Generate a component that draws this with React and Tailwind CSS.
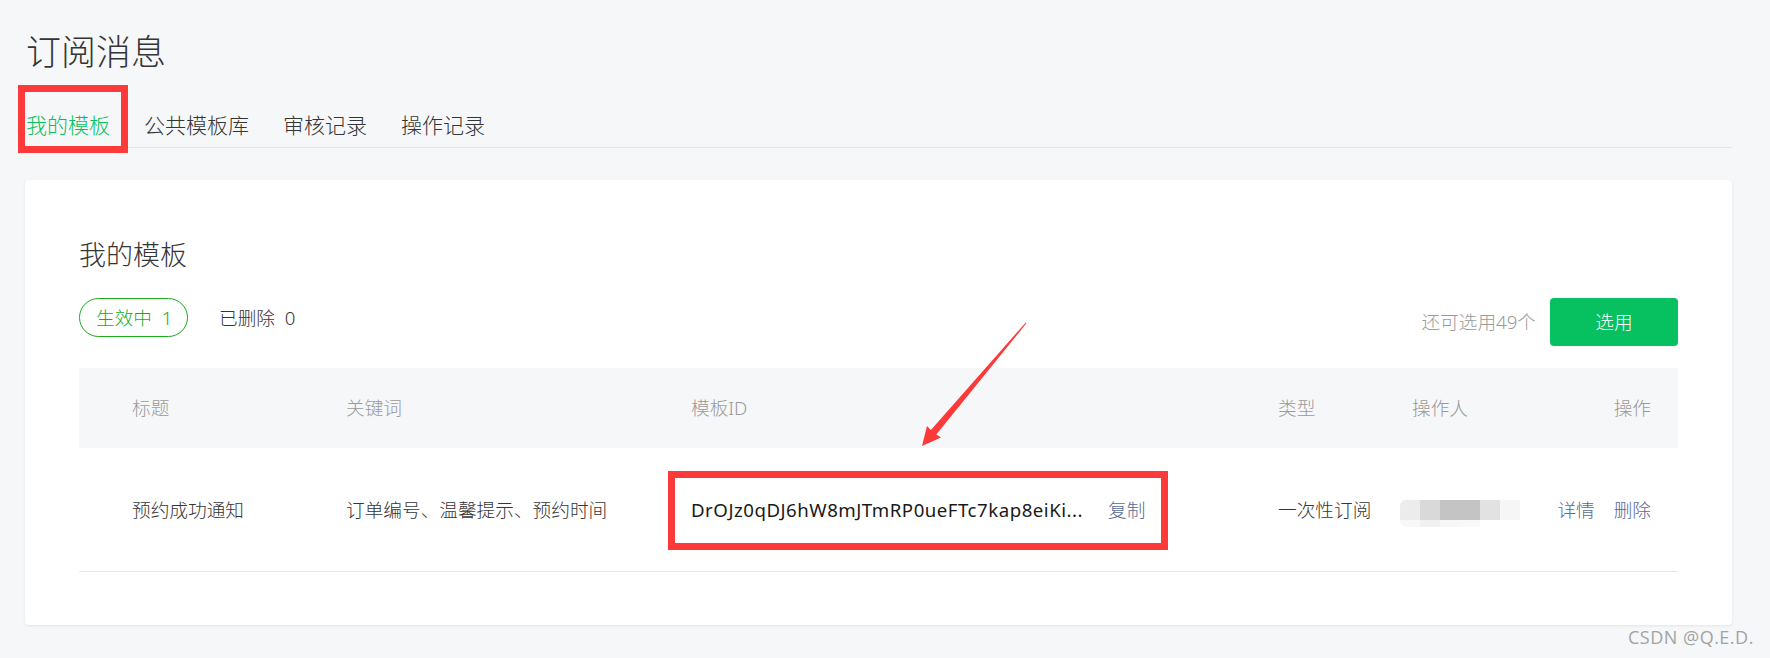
import React from 'react';

const FONT = { fontFamily: '"Noto Sans", "Noto Sans CJK SC", sans-serif' };

const TABS = ['我的模板', '公共模板库', '审核记录', '操作记录'];

const BLUR = [
  ['bg-[#ececec]', 'bg-[#d9d9d9]', 'bg-[#c4c4c4]', 'bg-[#c4c4c4]', 'bg-[#e2e2e2]', 'bg-[#f6f6f6]'],
  ['bg-[#f8f8f8]', 'bg-[#f1f1f1]', 'bg-[#f7f7f7]', 'bg-[#f9f9f9]', 'bg-white', 'bg-white'],
];

const BlurredName = () => (
  <div className="flex flex-col overflow-hidden rounded-[6px]">
    {BLUR.map((row, i) => (
      <div key={i} className={`flex ${i === 0 ? 'h-[20px]' : 'h-[7px]'}`}>
        {row.map((c, j) => (
          <div key={j} className={`w-[20px] ${c}`} />
        ))}
      </div>
    ))}
  </div>
);

const App = () => {
  return (
    <div
      className="relative h-[658px] overflow-hidden bg-[#f6f7f9] pl-[25px] pr-[38px] pt-[31px] font-light text-[#353535]"
      style={FONT}
    >
      <h1 className="pl-[1px] text-[35px] font-light leading-[42px]">订阅消息</h1>

      <div className="mt-[38px] flex gap-[34px] border-b border-[#e3e5ea] pb-[8px] pl-[1px]">
        {TABS.map((tab, i) => (
          <span
            key={tab}
            className={`text-[21px] leading-[28px] ${i === 0 ? 'text-[#07c160]' : 'text-[#353535]'}`}
          >
            {tab}
          </span>
        ))}
      </div>

      <div className="mt-[32px] rounded-[4px] bg-white px-[54px] pb-[53px] pt-[57px] shadow-[0_1px_3px_rgba(0,0,0,0.08)]">
        <h2 className="text-[27px] font-light leading-[36px]">我的模板</h2>

        <div className="mt-[25px] flex items-start justify-between">
          <div className="flex items-center">
            <span className="flex h-[39px] w-[109px] items-center rounded-full border border-[#1aad19] pl-[16px] text-[18.67px] text-[#1aad19]">
              生效中&nbsp;&nbsp;1
            </span>
            <span className="ml-[31px] text-[18.67px]">已删除&nbsp;&nbsp;0</span>
          </div>
          <div className="flex items-center">
            <span className="text-[18.67px] text-[#9a9a9a]">还可选用49个</span>
            <button className="ml-[14px] h-[48px] w-[128px] rounded-[4px] bg-[#07c160] text-[18.67px] text-white">
              选用
            </button>
          </div>
        </div>

        <div className="mt-[22px] text-[18.67px]">
          <div className="flex h-[80px] items-center bg-[#f6f7f9] pl-[53px] pr-[27px] text-[#9a9a9a]">
            <span className="w-[214px]">标题</span>
            <span className="w-[345px]">关键词</span>
            <span className="w-[587px]">模板ID</span>
            <span className="w-[134px]">类型</span>
            <span className="flex-1">操作人</span>
            <span>操作</span>
          </div>
          <div className="flex h-[124px] items-center border-b border-[#e6e6e6] pl-[53px] pr-[27px]">
            <span className="w-[214px]">预约成功通知</span>
            <span className="w-[345px]">订单编号、温馨提示、预约时间</span>
            <span className="flex w-[587px] items-center">
              <span className="w-[417px] font-normal tracking-[0.5px] text-[#1a1a1a]">
                DrOJz0qDJ6hW8mJTmRP0ueFTc7kap8eiKi...
              </span>
              <span className="text-[#576b95]">复制</span>
            </span>
            <span className="w-[122px]">一次性订阅</span>
            <span className="flex-1 pt-[7px]">
              <BlurredName />
            </span>
            <span className="flex gap-[19px] text-[#576b95]">
              <span>详情</span>
              <span>删除</span>
            </span>
          </div>
        </div>
      </div>

      {/* annotations over the screenshot */}
      <div className="absolute left-[18px] top-[85px] h-[68px] w-[110px] border-[7px] border-[#fc3a3a]" />
      <div className="absolute left-[668px] top-[471px] h-[79px] w-[500px] border-[7px] border-[#fc3a3a]" />
      <svg className="absolute left-0 top-0" width="1770" height="658" viewBox="0 0 1770 658" fill="none">
        <polygon
          points="1026.4,323.3 936.3,434.5 941,437.5 922,446 927,426 930.9,429.9 1025.6,322.7"
          fill="#fc3a3a"
        />
      </svg>

      <span
        className="absolute left-[1628px] top-[624px] text-[18px] font-normal tracking-[0.5px] text-[#a3a3a3]"
        style={{ fontFamily: '"Open Sans", sans-serif' }}
      >
        CSDN @Q.E.D.
      </span>
    </div>
  );
};

export default App;
